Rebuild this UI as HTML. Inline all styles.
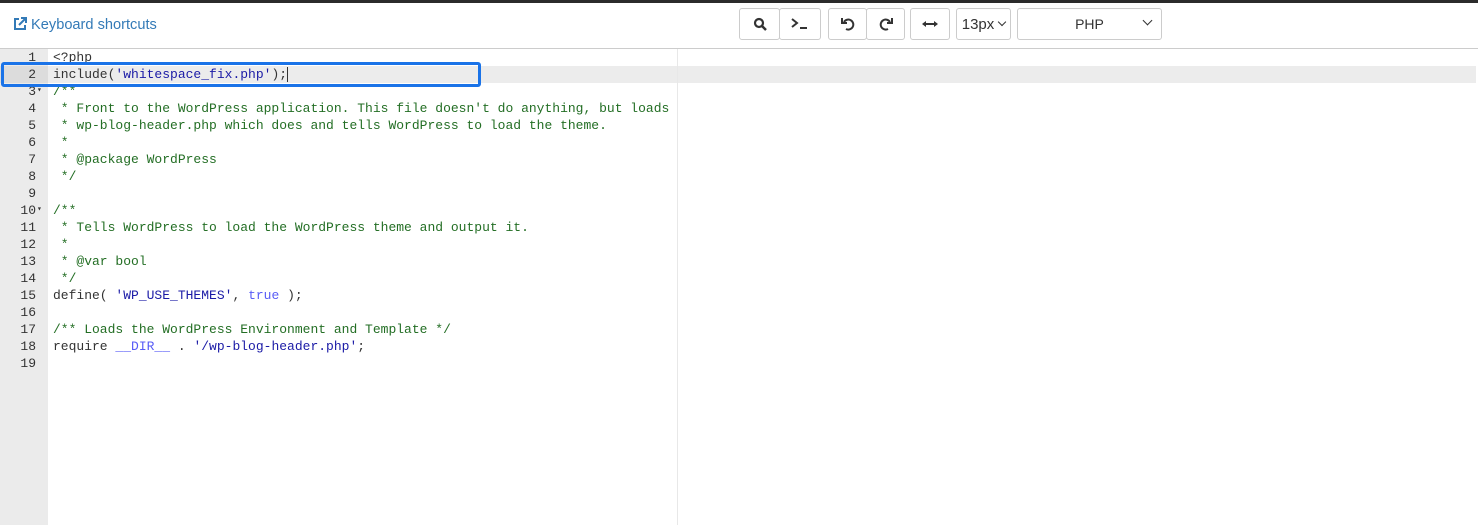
<!DOCTYPE html><html><head><style>
body{margin:0;width:1478px;height:525px;background:#fff;font-family:"Liberation Sans",sans-serif;overflow:hidden;position:relative}
.top{position:absolute;left:0;top:0;width:1478px;height:3px;background:#2b2b2b}
.ks{position:absolute;left:13px;top:17px;font-size:14.6px;color:#337ab7}
.btn{position:absolute;top:8px;height:32px;border:1px solid #ccc;border-radius:3px;background:#fff;box-sizing:border-box;display:flex;align-items:center;justify-content:center;color:#333;font-size:14px}
.hdr{position:absolute;left:0;top:48px;width:1478px;height:1px;background:#ccc}
.gut{position:absolute;left:0;top:49px;width:48px;height:476px;background:#ebebeb}
.ed{position:absolute;left:0;top:49px;font-family:"Liberation Mono",monospace;font-size:13px;line-height:17px;color:#333}
.ln{position:absolute;left:0;width:36px;text-align:right;color:#333}
.cd{position:absolute;left:53px;white-space:pre}
.c{color:#236e24}.s{color:#1a1aa6}.k{color:#585cf6}
.chev{display:inline-block;width:6px;height:6px;border-right:1.5px solid #333;border-bottom:1.5px solid #333;transform:rotate(45deg);margin-top:-4px}
</style></head><body>
<div class="top"></div>
<div class="ks"><svg width="14" height="14" viewBox="0 0 14 14" style="vertical-align:-2px"><path d="M6 2H2v10h10V8" fill="none" stroke="#337ab7" stroke-width="2"/><path d="M8 1h5v5M13 1L6 8" fill="none" stroke="#337ab7" stroke-width="2"/></svg> Keyboard shortcuts</div>
<div class="btn" style="left:739px;width:41px"><svg width="14" height="14" viewBox="0 0 14 14"><circle cx="6" cy="6" r="4" fill="none" stroke="#333" stroke-width="2.2"/><path d="M9 9l4 4" stroke="#333" stroke-width="2.5"/></svg></div>
<div class="btn" style="left:779px;width:42px"><svg width="18" height="12" viewBox="0 0 18 12"><path d="M1 1l5 4-5 4" fill="none" stroke="#333" stroke-width="2"/><path d="M9 10h7" stroke="#333" stroke-width="2"/></svg></div>
<div class="btn" style="left:828px;width:39px"><svg width="14" height="14" viewBox="0 0 14 14"><path d="M3 5A5 5 0 1 1 5 12" fill="none" stroke="#333" stroke-width="2"/><path d="M1 1v5h5" fill="none" stroke="#333" stroke-width="2"/></svg></div>
<div class="btn" style="left:866px;width:39px"><svg width="14" height="14" viewBox="0 0 14 14"><path d="M11 5A5 5 0 1 0 9 12" fill="none" stroke="#333" stroke-width="2"/><path d="M13 1v5H8" fill="none" stroke="#333" stroke-width="2"/></svg></div>
<div class="btn" style="left:910px;width:40px"><svg width="16" height="8" viewBox="0 0 16 8"><path d="M3 4h10" stroke="#333" stroke-width="2"/><path d="M0 4l4-3v6zM16 4l-4-3v6z" fill="#333"/></svg></div>
<div class="btn" style="left:956px;width:55px;font-size:15px">13px<span class="chev" style="margin-left:5px;width:5px;height:5px"></span></div>
<div class="btn" style="left:1017px;width:145px;font-size:14px">PHP<span class="chev" style="position:absolute;right:10px;top:12px"></span></div>
<div class="hdr"></div>
<div class="gut"></div>
<div style="position:absolute;left:0;top:66px;width:48px;height:17px;background:#dcdcdc"></div>
<div style="position:absolute;left:48px;top:66px;width:1428px;height:17px;background:#ececec"></div>
<div style="position:absolute;left:677px;top:49px;width:1px;height:476px;background:#e8e8e8"></div>
<div class="ed">
<div class="ln" style="top:0">1</div><div class="cd" style="top:0">&lt;?php</div>
<div class="ln" style="top:17px">2</div><div class="cd" style="top:17px">include(<span class="s">'whitespace_fix.php'</span>);</div>
<div class="ln" style="top:34px">3<span style="font-size:8px;position:absolute;left:37px;top:-1px">&#9662;</span></div><div class="cd c" style="top:34px">/**</div>
<div class="ln" style="top:51px">4</div><div class="cd c" style="top:51px"> * Front to the WordPress application. This file doesn't do anything, but loads</div>
<div class="ln" style="top:68px">5</div><div class="cd c" style="top:68px"> * wp-blog-header.php which does and tells WordPress to load the theme.</div>
<div class="ln" style="top:85px">6</div><div class="cd c" style="top:85px"> *</div>
<div class="ln" style="top:102px">7</div><div class="cd c" style="top:102px"> * @package WordPress</div>
<div class="ln" style="top:119px">8</div><div class="cd c" style="top:119px"> */</div>
<div class="ln" style="top:136px">9</div>
<div class="ln" style="top:153px">10<span style="font-size:8px;position:absolute;left:37px;top:-1px">&#9662;</span></div><div class="cd c" style="top:153px">/**</div>
<div class="ln" style="top:170px">11</div><div class="cd c" style="top:170px"> * Tells WordPress to load the WordPress theme and output it.</div>
<div class="ln" style="top:187px">12</div><div class="cd c" style="top:187px"> *</div>
<div class="ln" style="top:204px">13</div><div class="cd c" style="top:204px"> * @var bool</div>
<div class="ln" style="top:221px">14</div><div class="cd c" style="top:221px"> */</div>
<div class="ln" style="top:238px">15</div><div class="cd" style="top:238px">define( <span class="s">'WP_USE_THEMES'</span>, <span class="k">true</span> );</div>
<div class="ln" style="top:255px">16</div>
<div class="ln" style="top:272px">17</div><div class="cd c" style="top:272px">/** Loads the WordPress Environment and Template */</div>
<div class="ln" style="top:289px">18</div><div class="cd" style="top:289px">require <span class="k">__DIR__</span> . <span class="s">'/wp-blog-header.php'</span>;</div>
<div class="ln" style="top:306px">19</div>
</div>
<div style="position:absolute;left:287px;top:67px;width:1px;height:15px;background:#333"></div>
<div style="position:absolute;left:1px;top:62px;width:480px;height:25px;border:3px solid #1a73e8;border-radius:3px;box-sizing:border-box"></div>
</body></html>
